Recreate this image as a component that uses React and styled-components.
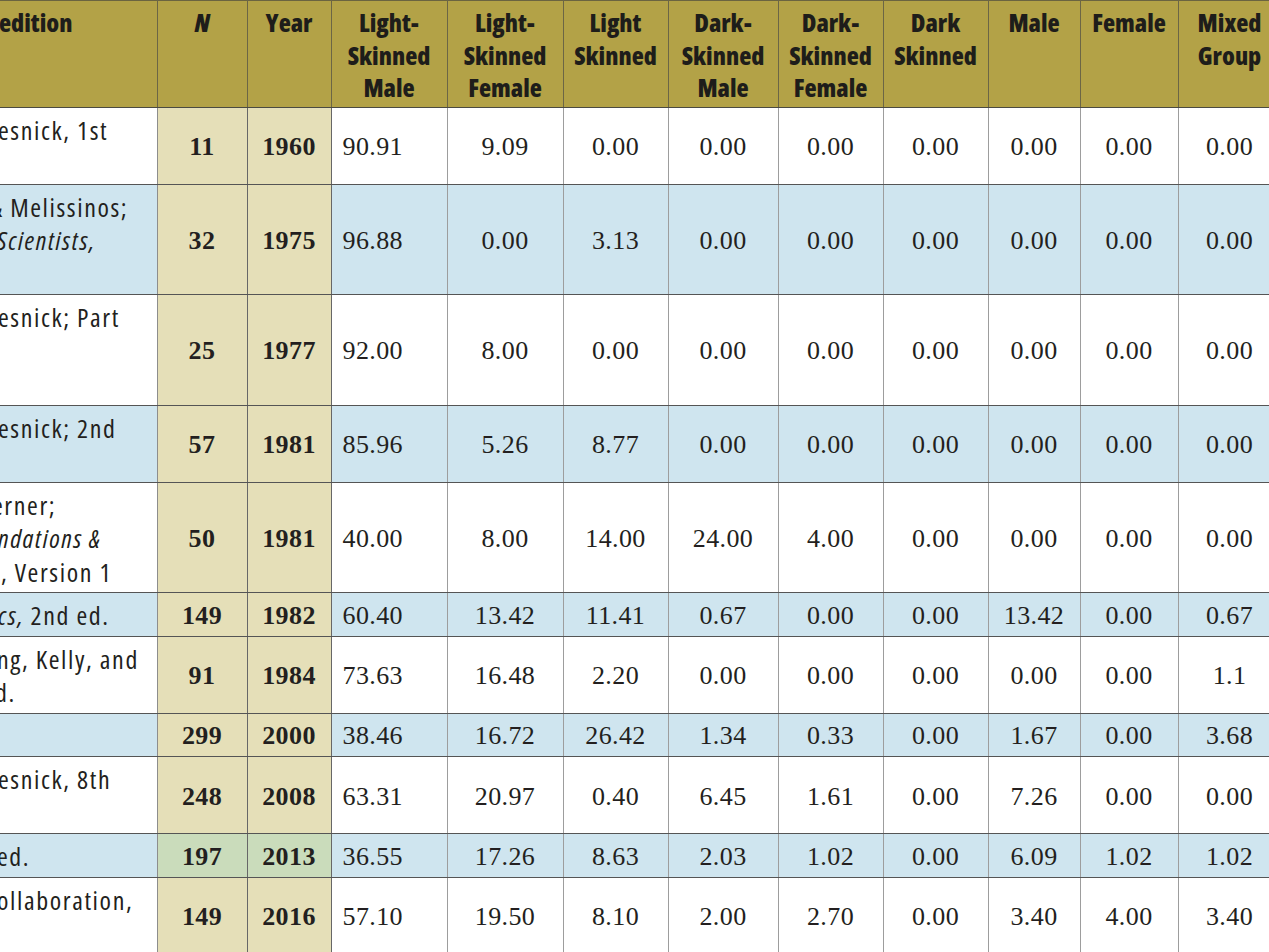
import React from "react";
import styled, { createGlobalStyle } from "styled-components";

const SANS = `"Open Sans", "DejaVu Sans Condensed", sans-serif`;
const SERIF = `"Liberation Serif", "Times New Roman", serif`;

const Global = createGlobalStyle`
  html, body { margin: 0; padding: 0; background: #ffffff; overflow: hidden; }
  #root { width: 1269px; height: 952px; overflow: hidden; }
`;

const Viewport = styled.div`
  width: 1269px;
  height: 952px;
  overflow: hidden;
`;

const Table = styled.table`
  border-collapse: collapse;
  table-layout: fixed;
  width: 1281px;
  color: #231f20;
  border-top: 1px solid #6b6440;
`;

const Col = styled.col`
  width: ${(p) => p.$w}px;
`;

const HeadCell = styled.th`
  background: #b3a247;
  font-family: ${SANS};
  font-stretch: 75%;
  font-weight: 760;
  font-size: 25px;
  line-height: 32.5px;
  color: #1e1d1a;
  text-align: center;
  vertical-align: top;
  padding: 5px 3px 3px;
  border-right: 1px solid #6c6645;
  border-bottom: 1px solid #4a4a42;
  white-space: nowrap;
  overflow: hidden;
`;

const HeadFirst = styled(HeadCell)`
  padding-left: 0;
  text-align: left;
`;

const NLabel = styled.i`
  font-style: italic;
`;

const SourceCell = styled.td`
  background: ${(p) => (p.$blue ? "#cfe5ef" : "#ffffff")};
  font-family: ${SANS};
  font-stretch: 75%;
  font-size: 26px;
  line-height: 33.5px;
  letter-spacing: 1.6px;
  vertical-align: top;
  padding: 6px 0 3px 0;
  border-right: 1px solid #8d8d8d;
  border-bottom: 1px solid #555555;
  overflow: hidden;
`;

const Lines = styled.div`
  min-height: ${(p) => p.$lines * 33.5}px;
`;

const Frag = styled.span`
  display: block;
  white-space: nowrap;
  margin-left: ${(p) => p.$shift || 0}px;
`;

const Em = styled.i`
  font-style: italic;
`;

const KeyCell = styled.td`
  background: ${(p) => (p.$green ? "#cadcbb" : "#e5dfb8")};
  font-family: ${SERIF};
  font-weight: 700;
  font-size: 26px;
  letter-spacing: 0.4px;
  text-align: center;
  vertical-align: middle;
  padding: 3px 2px 0;
  border-right: 1px solid #676767;
  border-bottom: 1px solid #555555;
`;

const ValueCell = styled.td`
  background: ${(p) => (p.$blue ? "#cfe5ef" : "#ffffff")};
  font-family: ${SERIF};
  font-size: 26px;
  letter-spacing: 0.4px;
  text-align: ${(p) => (p.$left ? "left" : "center")};
  vertical-align: middle;
  padding: ${(p) => (p.$left ? "3px 0 0 11px" : "3px 2px 0")};
  border-right: 1px solid #9d9d9d;
  border-bottom: 1px solid #555555;
  white-space: nowrap;
`;

const widths = [157, 90, 84, 116, 116, 105, 110, 105, 105, 92, 98, 103];

const headers = [
  <><NLabel>N</NLabel></>,
  <>Year</>,
  <>Light-<br />Skinned<br />Male</>,
  <>Light-<br />Skinned<br />Female</>,
  <>Light<br />Skinned</>,
  <>Dark-<br />Skinned<br />Male</>,
  <>Dark-<br />Skinned<br />Female</>,
  <>Dark<br />Skinned</>,
  <>Male</>,
  <>Female</>,
  <>Mixed<br />Group</>,
];

const rows = [
  {
    lines: 2,
    src: [<Frag key="a" $shift={-2}>esnick, 1st</Frag>],
    n: "11", year: "1960",
    v: ["90.91", "9.09", "0.00", "0.00", "0.00", "0.00", "0.00", "0.00", "0.00"],
  },
  {
    lines: 3,
    src: [
      <Frag key="a" $shift={-10}>&amp; Melissinos;</Frag>,
      <Frag key="b" $shift={-3}><Em>Scientists,</Em></Frag>,
    ],
    n: "32", year: "1975",
    v: ["96.88", "0.00", "3.13", "0.00", "0.00", "0.00", "0.00", "0.00", "0.00"],
  },
  {
    lines: 3,
    src: [<Frag key="a" $shift={-2}>esnick; Part</Frag>],
    n: "25", year: "1977",
    v: ["92.00", "8.00", "0.00", "0.00", "0.00", "0.00", "0.00", "0.00", "0.00"],
  },
  {
    lines: 2,
    src: [<Frag key="a" $shift={-2}>esnick; 2nd</Frag>],
    n: "57", year: "1981",
    v: ["85.96", "5.26", "8.77", "0.00", "0.00", "0.00", "0.00", "0.00", "0.00"],
  },
  {
    lines: 3,
    src: [
      <Frag key="a" $shift={-8}>erner;</Frag>,
      <Frag key="b" $shift={-2}><Em>ndations &amp;</Em></Frag>,
      <Frag key="c" $shift={1}>, Version 1</Frag>,
    ],
    n: "50", year: "1981",
    v: ["40.00", "8.00", "14.00", "24.00", "4.00", "0.00", "0.00", "0.00", "0.00"],
  },
  {
    lines: 1,
    src: [<Frag key="a" $shift={-2}><Em>cs,</Em> 2nd ed.</Frag>],
    n: "149", year: "1982",
    v: ["60.40", "13.42", "11.41", "0.67", "0.00", "0.00", "13.42", "0.00", "0.67"],
  },
  {
    lines: 2,
    src: [
      <Frag key="a" $shift={-3}>ng, Kelly, and</Frag>,
      <Frag key="b" $shift={-5}>d.</Frag>,
    ],
    n: "91", year: "1984",
    v: ["73.63", "16.48", "2.20", "0.00", "0.00", "0.00", "0.00", "0.00", "1.1"],
  },
  {
    lines: 1,
    src: [],
    n: "299", year: "2000",
    v: ["38.46", "16.72", "26.42", "1.34", "0.33", "0.00", "1.67", "0.00", "3.68"],
  },
  {
    lines: 2,
    src: [<Frag key="a" $shift={-2}>esnick, 8th</Frag>],
    n: "248", year: "2008",
    v: ["63.31", "20.97", "0.40", "6.45", "1.61", "0.00", "7.26", "0.00", "0.00"],
  },
  {
    lines: 1,
    src: [<Frag key="a" $shift={-3}>ed.</Frag>],
    n: "197", year: "2013", green: true,
    v: ["36.55", "17.26", "8.63", "2.03", "1.02", "0.00", "6.09", "1.02", "1.02"],
  },
  {
    lines: 2,
    src: [<Frag key="a" $shift={-3}>ollaboration,</Frag>],
    n: "149", year: "2016",
    v: ["57.10", "19.50", "8.10", "2.00", "2.70", "0.00", "3.40", "4.00", "3.40"],
  },
];

export default function App() {
  return (
    <>
      <Global />
      <Viewport>
        <Table>
          <colgroup>
            {widths.map((w, i) => (
              <Col key={i} $w={w} />
            ))}
          </colgroup>
          <thead>
            <tr>
              <HeadFirst>
                <Frag $shift={-1}>edition</Frag>
              </HeadFirst>
              {headers.map((h, i) => (
                <HeadCell key={i}>{h}</HeadCell>
              ))}
            </tr>
          </thead>
          <tbody>
            {rows.map((r, i) => {
              const blue = i % 2 === 1;
              return (
                <tr key={i}>
                  <SourceCell $blue={blue}>
                    <Lines $lines={r.lines}>{r.src}</Lines>
                  </SourceCell>
                  <KeyCell $green={r.green}>{r.n}</KeyCell>
                  <KeyCell $green={r.green}>{r.year}</KeyCell>
                  {r.v.map((val, j) => (
                    <ValueCell key={j} $blue={blue} $left={j === 0}>
                      {val}
                    </ValueCell>
                  ))}
                </tr>
              );
            })}
          </tbody>
        </Table>
      </Viewport>
    </>
  );
}
